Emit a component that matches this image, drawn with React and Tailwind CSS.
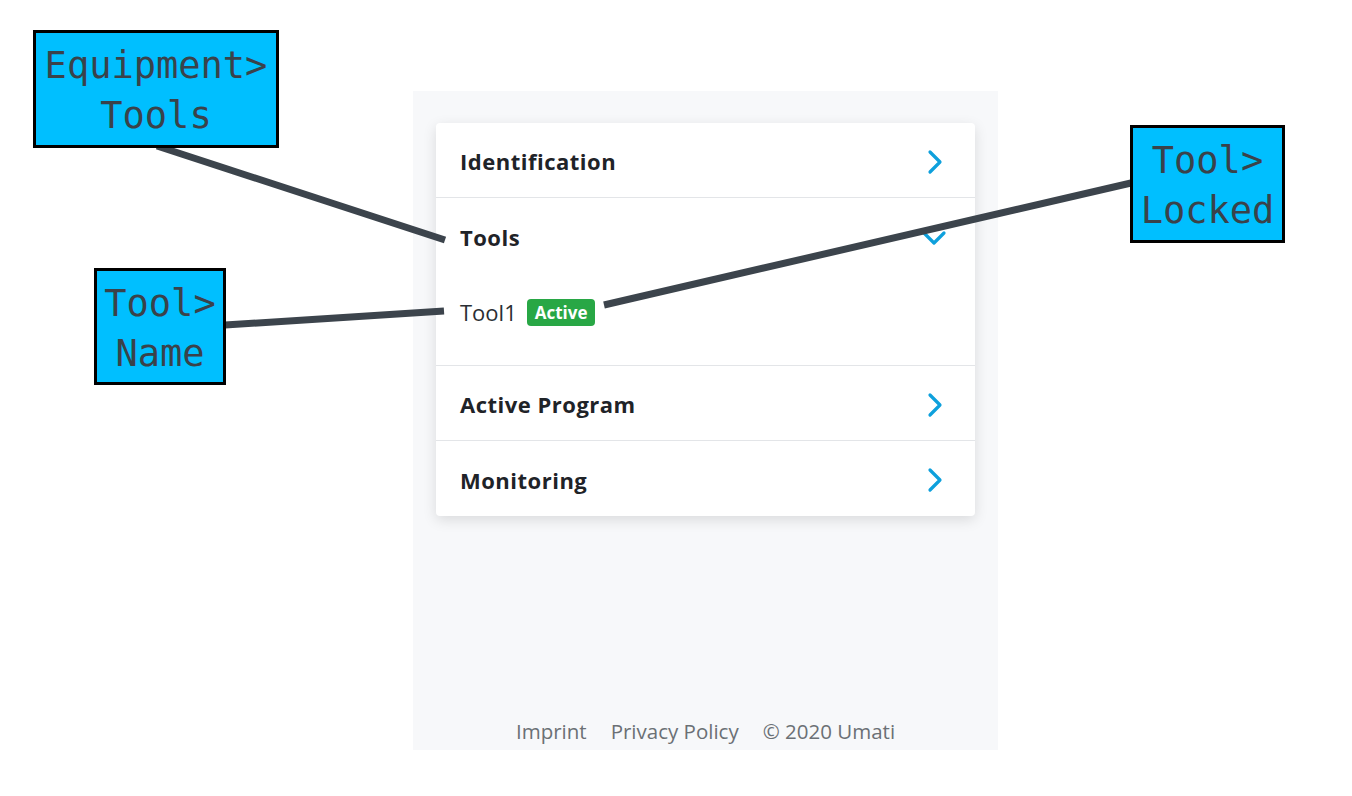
const ChevronRight = () => (
  <svg width="20" height="26" viewBox="0 0 20 26" fill="none">
    <path d="M5 3 L15 13 L5 23" stroke="#0ea0dc" strokeWidth="3.2" strokeLinecap="round" strokeLinejoin="round" />
  </svg>
)

const ChevronDown = () => (
  <svg width="26" height="20" viewBox="0 0 26 20" fill="none">
    <path d="M3 5 L13 15 L23 5" stroke="#0ea0dc" strokeWidth="3.2" strokeLinecap="round" strokeLinejoin="round" />
  </svg>
)

const Row = ({ title, last }) => (
  <div className={`h-[75px] flex items-center justify-between pl-6 pr-[30px] pt-[3px] ${last ? '' : 'border-b border-[#e3e5e8]'}`}>
    <span className="text-[22px] tracking-[0.5px] font-bold text-[#1f2328]">{title}</span>
    <ChevronRight />
  </div>
)

const Callout = ({ className, lines }) => (
  <div
    className={`absolute bg-[#00bfff] border-[3px] border-black flex flex-col items-center justify-center pt-[4px] text-[37px] leading-[50px] text-[#3a424a] ${className}`}
    style={{ fontFamily: '"DejaVu Sans Mono", monospace' }}
  >
    {lines.map((l) => (
      <span key={l}>{l}</span>
    ))}
  </div>
)

export default function App() {
  return (
    <div className="relative w-[1352px] h-[796px] bg-white overflow-hidden" style={{ fontFamily: '"Open Sans", "Noto Sans", sans-serif' }}>
      <div className="ml-[413px] mt-[91px] w-[585px] h-[659px] bg-[#f7f8fa] flex flex-col px-[23px] pt-[32px]">
        <div className="bg-white rounded-[4px] shadow-[0_4px_14px_rgba(0,0,0,0.12)]">
          <Row title="Identification" />
          <div className="border-b border-[#e3e5e8]">
            <div className="h-[76px] flex items-center justify-between pl-6 pr-[28px] pt-[3px]">
              <span className="text-[22px] tracking-[0.5px] font-bold text-[#1f2328]">Tools</span>
              <ChevronDown />
            </div>
            <div className="flex items-center gap-[10px] pl-6 pt-[22px] pb-[36px]">
              <span className="text-[22px] text-[#2a2e33]">Tool1</span>
              <span className="bg-[#28a745] text-white text-[17px] font-bold leading-none px-[8px] py-[5px] rounded-[4px]">Active</span>
            </div>
          </div>
          <Row title="Active Program" />
          <Row title="Monitoring" last />
        </div>
        <div className="mt-auto mb-[3px] flex justify-center gap-6 text-[20.5px] text-[#6b7075]">
          <span>Imprint</span>
          <span>Privacy Policy</span>
          <span>© 2020 Umati</span>
        </div>
      </div>

      <svg className="absolute inset-0 pointer-events-none" width="1352" height="796">
        <line x1="157" y1="146" x2="445" y2="240" stroke="#3c444c" strokeWidth="7" />
        <line x1="225" y1="325" x2="444" y2="311" stroke="#3c444c" strokeWidth="7" />
        <line x1="604" y1="305" x2="1131" y2="183" stroke="#3c444c" strokeWidth="7" />
      </svg>

      <Callout className="left-[33px] top-[30px] w-[246px] h-[118px]" lines={['Equipment>', 'Tools']} />
      <Callout className="left-[94px] top-[268px] w-[132px] h-[117px]" lines={['Tool>', 'Name']} />
      <Callout className="left-[1130px] top-[125px] w-[155px] h-[118px]" lines={['Tool>', 'Locked']} />
    </div>
  )
}
